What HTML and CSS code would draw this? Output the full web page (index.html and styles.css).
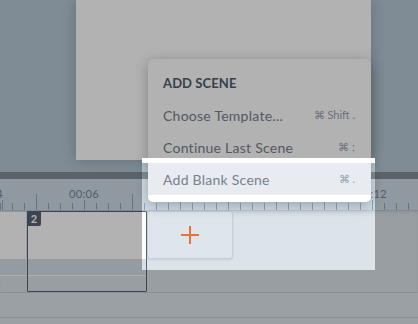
FILE: index.html
```html
<!DOCTYPE html>
<html lang="en">
<head>
<meta charset="utf-8">
<title>Add Scene</title>
<link rel="stylesheet" href="styles.css">
</head>
<body>
<div class="app">
  <div class="stage">
    <div class="canvas"></div>
  </div>
  <div class="divider"></div>
  <div class="ruler">
    <div class="labels">
      <span class="cell"><span class="lbl">00:04</span></span>
      <span class="cell"><span class="lbl">00:06</span></span>
      <span class="cell"><span class="lbl">00:08</span></span>
      <span class="cell"><span class="lbl">00:10</span></span>
      <span class="cell"><span class="lbl">00:12</span></span>
    </div>
  </div>
  <div class="tracks">
    <div class="row scenes">
      <div class="scene prev">
        <div class="thumb"></div>
        <div class="strip"></div>
      </div>
      <div class="scene selected">
        <span class="num">2</span>
        <div class="thumb"></div>
        <div class="strip"></div>
      </div>
      <button class="add-scene" aria-label="Add scene">
        <svg width="18" height="18" viewBox="0 0 18 18"><path d="M9 0V18M0 9H18" stroke="#e8733a" stroke-width="2" fill="none"/></svg>
      </button>
    </div>
    <div class="row audio"></div>
    <div class="row extra"></div>
  </div>

  <div class="menu">
    <div class="menu-title">ADD SCENE</div>
    <div class="item"><span>Choose Template…</span><span class="kbd">⌘ Shift .</span></div>
    <div class="item"><span>Continue Last Scene</span><span class="kbd">⌘ ;</span></div>
    <div class="item active"><span>Add Blank Scene</span><span class="kbd">⌘ .</span></div>
  </div>

  <div class="spotlight"></div>
</div>
</body>
</html>
```

FILE: styles.css
```css
* { box-sizing: border-box; }

html, body {
  margin: 0;
  padding: 0;
}

body {
  width: 418px;
  height: 324px;
  overflow: hidden;
  font-family: Lato, "Open Sans", sans-serif;
}

.app {
  position: relative;
  width: 418px;
  height: 324px;
  overflow: hidden;
  background: #dce3e9;
}

.stage {
  height: 172px;
  padding-left: 76px;
  background: #b7c9d6;
}

.canvas {
  width: 295px;
  height: 160px;
  background: #ffffff;
  box-shadow: 0 0 14px rgba(0, 0, 0, 0.22);
}

.divider {
  height: 7px;
  background: #828f98;
}

.ruler {
  height: 32px;
  border-bottom: 1px solid #b9c6d2;
  background-color: #d0dce6;
  background-image:
    repeating-linear-gradient(to right, #8ea6be 0 1px, transparent 1px 48px),
    repeating-linear-gradient(to right, #8ea6be 0 1px, transparent 1px 12px);
  background-size: 100% 16px, 100% 7px;
  background-position: 36px 100%, 0 100%;
  background-repeat: repeat-x;
  overflow: hidden;
}

.labels {
  display: flex;
  margin-left: -60px;
  padding-top: 9px;
}

.cell {
  flex: 0 0 96px;
  text-align: center;
  font-size: 11px;
  line-height: 12px;
}

.lbl {
  display: inline-block;
  color: #72879c;
  background: #d0dce6;
  letter-spacing: 0.3px;
}

.tracks {
  display: flex;
  flex-direction: column;
}

.row {
  border-bottom: 1px solid #c5ccdc;
}

.scenes {
  height: 82px;
  display: flex;
  align-items: flex-start;
  box-shadow: inset 0 3px 4px -2px rgba(60, 80, 100, 0.15);
}

.audio {
  height: 25px;
  background: #dfe6ec;
  border-bottom-color: #c9d1d6;
}

.extra {
  height: 10px;
  background: #dfe6ec;
}

.scene {
  position: relative;
  flex: 0 0 120px;
  height: 81px;
  border: 1px solid transparent;
}

.scene.prev {
  margin-left: -93px;
}

.scene.selected {
  border-color: #5a6174;
  border-radius: 1px;
}

.thumb {
  height: 47px;
  background: #ffffff;
}

.strip {
  height: 17px;
  background: #d5e0e9;
  border-bottom: 1px solid #fbfcfd;
}

.num {
  position: absolute;
  left: -1px;
  top: -1px;
  width: 14px;
  height: 15px;
  background: #5a6174;
  color: #ffffff;
  font-size: 11px;
  font-weight: 700;
  line-height: 15px;
  text-align: center;
  border-bottom-right-radius: 2px;
}

.add-scene {
  flex: 0 0 86px;
  height: 48px;
  margin: 0;
  padding: 0;
  display: flex;
  align-items: center;
  justify-content: center;
  background: #dfe5ec;
  border: 1px solid #c4ceda;
  border-radius: 3px;
  box-shadow: 0 1px 2px rgba(60, 80, 100, 0.12);
}

.menu {
  position: absolute;
  left: 148px;
  top: 59px;
  width: 223px;
  height: 143px;
  padding: 8px 0 7px;
  background: #ffffff;
  border-radius: 5px;
  box-shadow: 0 3px 14px rgba(0, 0, 0, 0.28);
  z-index: 2;
}

.menu-title {
  height: 32px;
  padding-left: 15px;
  font-size: 13px;
  font-weight: 700;
  line-height: 32px;
  color: #4e5e6c;
  letter-spacing: 0.1px;
}

.item {
  height: 32px;
  display: flex;
  align-items: center;
  justify-content: space-between;
  padding: 0 16px 0 15px;
  font-size: 14px;
  letter-spacing: 0.25px;
  color: #77818f;
}

.item.active {
  background: #e8ebef;
}

.kbd {
  font-size: 11px;
  letter-spacing: 0;
  color: #98a2b0;
}

.spotlight {
  position: absolute;
  left: 142px;
  top: 158px;
  width: 233px;
  height: 112px;
  border-top: 5px solid #ffffff;
  box-shadow: 0 0 0 700px rgba(0, 0, 0, 0.3);
  z-index: 3;
  pointer-events: none;
}
```
